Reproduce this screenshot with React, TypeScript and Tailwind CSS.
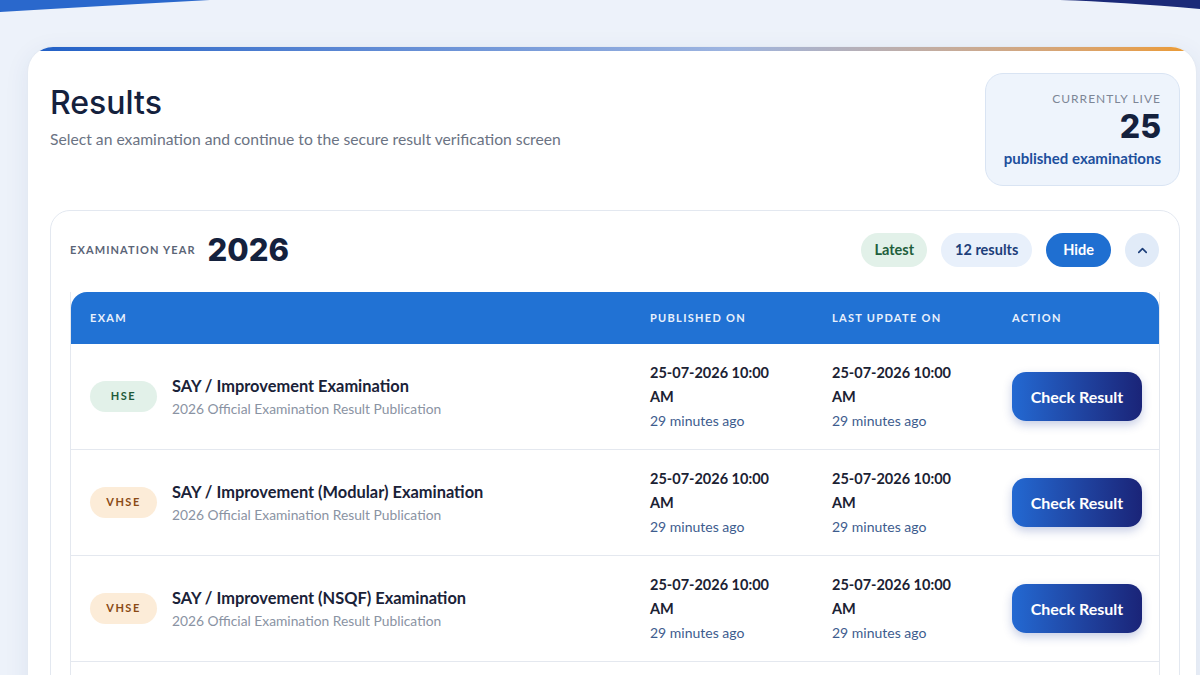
import { ChevronUp } from "lucide-react";

const rows = [
  { tag: "HSE", title: "SAY / Improvement Examination" },
  { tag: "VHSE", title: "SAY / Improvement (Modular) Examination" },
  { tag: "VHSE", title: "SAY / Improvement (NSQF) Examination" },
  { tag: "HSE", title: "SAY / Improvement (Revaluation) Examination" },
];

function TopWave() {
  return (
    <svg className="absolute left-0 top-0 w-[1200px] h-[16px]" viewBox="0 0 1200 16" preserveAspectRatio="none">
      <path d="M0 0 H210 Q100 6 0 12 Z" fill="#2a68cc" />
      <path d="M1060 0 H1200 V9 Q1120 2 1060 0 Z" fill="#1b2a78" />
    </svg>
  );
}

function DateCell() {
  return (
    <div className="flex flex-col text-[14.5px] leading-[24px]">
      <span className="font-bold text-[#1b2233]">25-07-2026 10:00</span>
      <span className="font-bold text-[#1b2233]">AM</span>
      <span className="text-[14px] text-[#3d5c8e]">29 minutes ago</span>
    </div>
  );
}

function Row({ tag, title }: { tag: string; title: string }) {
  const hse = tag === "HSE";
  return (
    <div className="grid grid-cols-[560px_182px_180px_1fr] items-center h-[106px] border-b border-[#e4e8ef]">
      <div className="flex items-center pl-[19px]">
        <span
          className={
            hse
              ? "w-[67px] h-[31px] rounded-full bg-[#e2f1e9] text-[#1f5a39] text-[11px] font-bold tracking-[1.5px] flex items-center justify-center"
              : "w-[67px] h-[31px] rounded-full bg-[#fcecd8] text-[#8a4a14] text-[11px] font-bold tracking-[1.5px] flex items-center justify-center"
          }
        >
          {tag}
        </span>
        <div className="ml-[15px] flex flex-col gap-[2px]">
          <span className="text-[16.4px] leading-[22px] font-bold text-[#1a2238]">{title}</span>
          <span className="text-[13.8px] leading-[20px] text-[#8a93a3]">2026 Official Examination Result Publication</span>
        </div>
      </div>
      <div className="pl-[19px]">
        <DateCell />
      </div>
      <div className="pl-[19px]">
        <DateCell />
      </div>
      <div className="pl-[19px]">
        <button className="w-[130px] h-[49px] rounded-[14px] bg-gradient-to-r from-[#2369d2] to-[#1a2478] text-white text-[16px] font-bold shadow-[0_4px_10px_rgba(30,60,150,0.25)]">
          Check Result
        </button>
      </div>
    </div>
  );
}

export default function App() {
  return (
    <div
      className="relative w-[1200px] h-[675px] overflow-hidden bg-[#edf2fa]"
      style={{ fontFamily: "Lato, 'Noto Sans', sans-serif" }}
    >
      <TopWave />
      <div className="ml-[27px] mr-[3px] mt-[46px] h-[700px] bg-white rounded-t-[26px] overflow-hidden border border-[#e4eaf3] shadow-[0_6px_24px_rgba(40,70,130,0.08)]">
        <div className="h-[4px] bg-gradient-to-r from-[#1f5fc6] via-[#9db4e0] via-60% to-[#ec9a2c]" />
        <div className="pl-[22px] pr-[16px] pt-[22px]">
          <div className="flex justify-between items-start">
            <div className="mt-[11px]">
              <h1 className="text-[32px] leading-[38px] font-medium text-[#14213d]" style={{ fontFamily: "Inter, sans-serif" }}>
                Results
              </h1>
              <p className="mt-[6px] text-[15.7px] leading-[22px] text-[#6b7383]">
                Select an examination and continue to the secure result verification screen
              </p>
            </div>
            <div className="w-[195px] h-[113px] rounded-[18px] bg-[#eef4fc] border border-[#d9e4f3] flex flex-col items-end pr-[18px] pt-[17px]">
              <span className="text-[12px] leading-[16px] tracking-[1px] text-[#7d8696]">CURRENTLY LIVE</span>
              <span className="mt-[2px] text-[32px] leading-[36px] font-extrabold text-[#14213d]" style={{ fontFamily: "Inter, sans-serif" }}>
                25
              </span>
              <span className="mt-[3px] text-[15px] leading-[20px] font-bold text-[#1d4f9c]">published examinations</span>
            </div>
          </div>

          <div className="mt-[24px] rounded-t-[20px] border border-[#e3e8f0] px-[19px] pt-[22px] h-[500px]">
            <div className="flex items-center justify-between h-[34px]">
              <div className="flex items-center">
                <span className="text-[11px] font-bold tracking-[1.1px] text-[#5b6577]">EXAMINATION YEAR</span>
                <span className="ml-[12px] text-[31px] font-extrabold text-[#14213d]" style={{ fontFamily: "Inter, sans-serif" }}>
                  2026
                </span>
              </div>
              <div className="flex items-center gap-[14px] pr-[1px]">
                <span className="h-[34px] px-[13px] rounded-full bg-[#e2f1e9] text-[#1e5f3c] text-[14.5px] font-bold flex items-center">Latest</span>
                <span className="h-[34px] px-[14px] rounded-full bg-[#e8f0fb] text-[#1d3f7a] text-[14.5px] font-bold flex items-center">12 results</span>
                <span className="h-[34px] px-[17px] rounded-full bg-[#1f6fd1] text-white text-[14.5px] font-bold flex items-center">Hide</span>
                <span className="w-[34px] h-[34px] rounded-full bg-[#e1ebf8] text-[#1d3f7a] flex items-center justify-center">
                  <ChevronUp size={15} strokeWidth={2.6} />
                </span>
              </div>
            </div>

            <div className="mt-[25px] border-x border-[#e4e8ef]">
              <div className="grid grid-cols-[560px_182px_180px_1fr] items-center h-[52px] bg-[#2172d4] rounded-t-[16px] text-[11px] font-bold tracking-[1.3px] text-[#e8f0fc]">
                <span className="pl-[19px]">EXAM</span>
                <span className="pl-[19px]">PUBLISHED ON</span>
                <span className="pl-[19px]">LAST UPDATE ON</span>
                <span className="pl-[19px]">ACTION</span>
              </div>
              {rows.map((r, i) => (
                <Row key={i} tag={r.tag} title={r.title} />
              ))}
            </div>
          </div>
        </div>
      </div>
    </div>
  );
}
